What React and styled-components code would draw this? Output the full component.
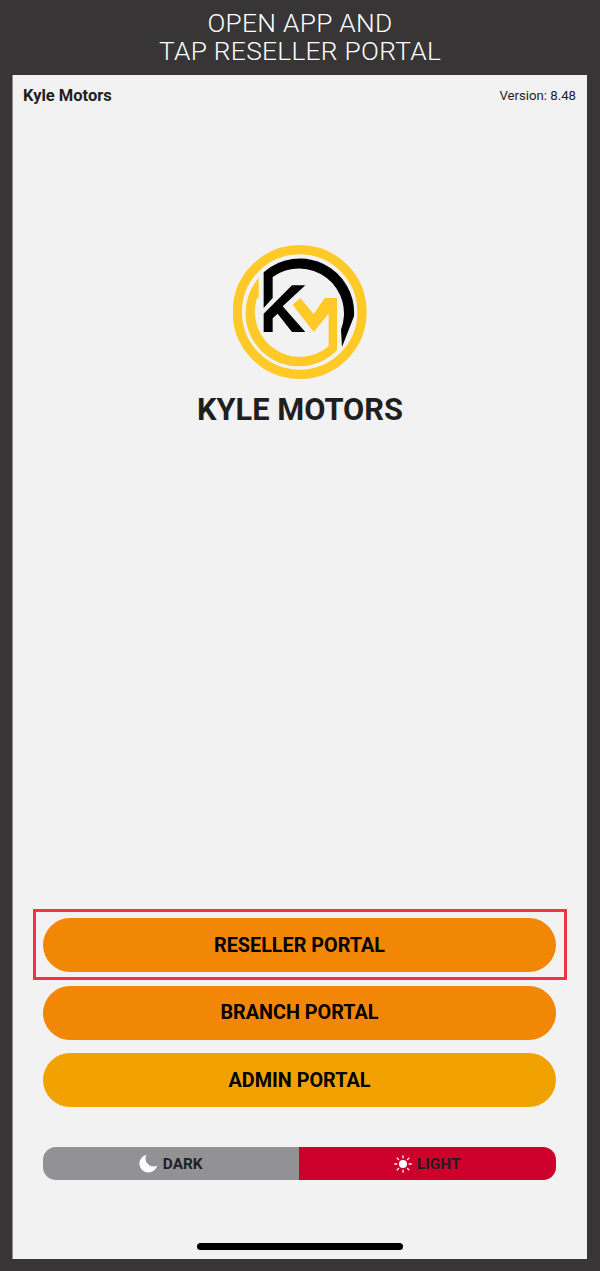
import React from 'react'
import styled, { createGlobalStyle } from 'styled-components'

const Global = createGlobalStyle`
  html, body { margin: 0; padding: 0; background: #373536; }
  body { font-family: Roboto, "Liberation Sans", sans-serif; }
`

const Page = styled.div`
  width: 600px;
  height: 1271px;
  display: flex;
  flex-direction: column;
  background: #373536;
  overflow: hidden;
`

const Caption = styled.h1`
  height: 75px;
  margin: 0;
  padding-top: 9px;
  box-sizing: border-box;
  flex: none;
  color: #fff;
  font-family: Roboto, "Liberation Sans", Arial, sans-serif;
  font-weight: 300;
  font-size: 26.3px;
  line-height: 28px;
  letter-spacing: 0.3px;
  text-align: center;
`

const Phone = styled.main`
  width: 575px;
  height: 1184px;
  margin-left: 12px;
  flex: none;
  display: flex;
  flex-direction: column;
  box-sizing: border-box;
  background: #f2f2f2;
  border-left: 1px solid #8c8c8c;
  color: #1f1f1f;
`

const TopBar = styled.header`
  display: flex;
  justify-content: space-between;
  align-items: center;
  height: 40px;
  padding: 0 11px 0 10px;
`

const AppName = styled.span`
  font-size: 16.5px;
  font-weight: 700;
`

const Version = styled.span`
  font-size: 13.2px;
  font-weight: 400;
`

const Brand = styled.section`
  margin-top: 130px;
  display: flex;
  flex-direction: column;
  align-items: center;
`

const LogoSvg = styled.svg`
  width: 134px;
  height: 134px;
  display: block;
`

const BrandName = styled.div`
  margin-top: 13px;
  font-size: 30.8px;
  line-height: 36px;
  font-weight: 700;
`

const Portals = styled.div`
  margin-top: auto;
  padding: 0 31px 0 30px;
  display: flex;
  flex-direction: column;
  gap: 13.5px;
`

const PortalButton = styled.button`
  position: relative;
  height: 54px;
  border: 0;
  border-radius: 27px;
  background: ${p => p.$color};
  color: #000;
  font-family: inherit;
  font-size: 19.8px;
  font-weight: 700;
`

const Highlight = styled.span`
  position: absolute;
  top: -9px;
  bottom: -8px;
  left: -10px;
  right: -11px;
  border: 3.5px solid #ee3342;
`

const ThemeToggle = styled.div`
  margin: 40px 31px 0 30px;
  height: 33px;
  display: grid;
  grid-template-columns: 255.5px 1fr;
  border-radius: 13px;
  overflow: hidden;
`

const ThemeOption = styled.div`
  display: flex;
  align-items: center;
  justify-content: center;
  gap: 5px;
  background: ${p => p.$color};
  color: #1f1f24;
  font-size: 15.4px;
  font-weight: 700;
`

const HomeBar = styled.div`
  width: 206px;
  height: 7px;
  margin: 62.5px auto 9.5px;
  flex: none;
  border-radius: 4px;
  background: #000;
`

const Logo = () => (
  <LogoSvg viewBox="98 46 402 402" aria-hidden="true">
    <circle cx="298" cy="247" r="187" fill="none" stroke="#ffca28" strokeWidth="28" />
    <path
      fill="#ffca28"
      d="M175 145 L175 205 L170 205 A135 135 0 0 0 385 350 L385 252 L340 307 L277 225 L300 205 L340 253 L373 205 L410 205 L410 362 A160 160 0 0 1 175 145 Z"
    />
    <path
      fill="#000"
      d="M190 128 A163 163 0 0 1 461 260 L425 352 L422 300 A135 135 0 0 0 217 142 L217 205 L190 235 Z"
    />
    <path
      fill="#000"
      d="M275 167 L315 167 L247 230 L315 307 L275 307 L232 252 L217 266 L217 307 L190 307 L190 252 Z"
    />
  </LogoSvg>
)

const MoonIcon = () => (
  <svg width="19" height="19" viewBox="0 0 19 19" aria-hidden="true">
    <path fill="#fff" d="M7.5 0.8 A9 9 0 1 0 18.2 11.6 A8 8 0 0 1 7.5 0.8 Z" />
  </svg>
)

const SunIcon = () => (
  <svg width="18" height="18" viewBox="0 0 18 18" aria-hidden="true">
    <circle cx="9" cy="9" r="4" fill="#fff" />
    <path
      stroke="#fff"
      strokeWidth="1.3"
      strokeLinecap="round"
      d="M9 .8V2.8M9 15.2V17.2M.8 9H2.8M15.2 9H17.2M3.2 3.2L4.6 4.6M13.4 13.4L14.8 14.8M3.2 14.8L4.6 13.4M13.4 4.6L14.8 3.2"
    />
  </svg>
)

export default function App() {
  return (
    <Page>
      <Global />
      <Caption>
        OPEN APP AND
        <br />
        TAP RESELLER PORTAL
      </Caption>
      <Phone>
        <TopBar>
          <AppName>Kyle Motors</AppName>
          <Version>Version: 8.48</Version>
        </TopBar>
        <Brand>
          <Logo />
          <BrandName>KYLE MOTORS</BrandName>
        </Brand>
        <Portals>
          <PortalButton $color="#f28705">
            RESELLER PORTAL
            <Highlight />
          </PortalButton>
          <PortalButton $color="#f28705">BRANCH PORTAL</PortalButton>
          <PortalButton $color="#f2a200">ADMIN PORTAL</PortalButton>
        </Portals>
        <ThemeToggle>
          <ThemeOption $color="#929194">
            <MoonIcon />
            DARK
          </ThemeOption>
          <ThemeOption $color="#cc002b">
            <SunIcon />
            LIGHT
          </ThemeOption>
        </ThemeToggle>
        <HomeBar />
      </Phone>
    </Page>
  )
}
